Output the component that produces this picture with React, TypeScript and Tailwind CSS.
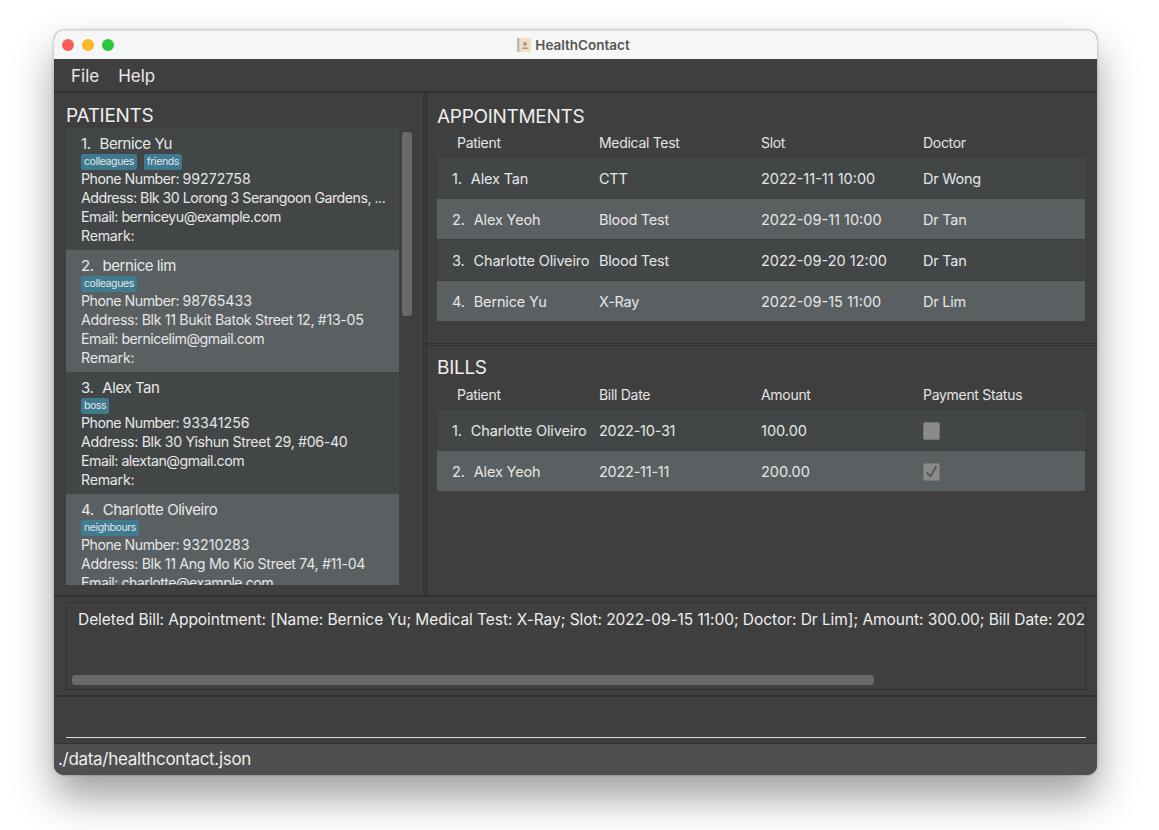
import React from 'react';

type Patient = { name: string; tags: string[]; phone: string; address: string; email: string };

const patients: Patient[] = [
  { name: 'Bernice Yu', tags: ['colleagues', 'friends'], phone: '99272758', address: 'Blk 30 Lorong 3 Serangoon Gardens, ...', email: 'berniceyu@example.com' },
  { name: 'bernice lim', tags: ['colleagues'], phone: '98765433', address: 'Blk 11 Bukit Batok Street 12, #13-05', email: 'bernicelim@gmail.com' },
  { name: 'Alex Tan', tags: ['boss'], phone: '93341256', address: 'Blk 30 Yishun Street 29, #06-40', email: 'alextan@gmail.com' },
  { name: 'Charlotte Oliveiro', tags: ['neighbours'], phone: '93210283', address: 'Blk 11 Ang Mo Kio Street 74, #11-04', email: 'charlotte@example.com' },
];

const appointments = [
  ['Alex Tan', 'CTT', '2022-11-11 10:00', 'Dr Wong'],
  ['Alex Yeoh', 'Blood Test', '2022-09-11 10:00', 'Dr Tan'],
  ['Charlotte Oliveiro', 'Blood Test', '2022-09-20 12:00', 'Dr Tan'],
  ['Bernice Yu', 'X-Ray', '2022-09-15 11:00', 'Dr Lim'],
];

const bills = [
  ['Charlotte Oliveiro', '2022-10-31', '100.00'],
  ['Alex Yeoh', '2022-11-11', '200.00'],
];

const rowBg = (i: number) => (i % 2 === 0 ? 'bg-[#424647]' : 'bg-[#5a5f62]');

const PatientCard = ({ p, i }: { p: Patient; i: number }) => (
  <div className={`h-[122px] shrink-0 pl-[15px] pt-[5px] text-[14.2px] leading-[19px] tracking-[-0.25px] text-[#e6e6e6] ${rowBg(i)}`}>
    <div className="flex h-[21px] items-center gap-[9px] text-[15px] tracking-[-0.45px] text-[#e8e8e8]">
      <span>{i + 1}.</span>
      <span>{p.name}</span>
    </div>
    <div className="flex h-[15px] items-center gap-[7px]">
      {p.tags.map((t) => (
        <span key={t} className="flex h-4 items-center rounded-[2px] bg-[#3e7b91] px-[3px] text-[10.5px] tracking-[-0.4px] text-[#e4e4e4]">{t}</span>
      ))}
    </div>
    <div>
      <span className="tracking-[-0.5px]">Phone Number: </span>
      <span className="tracking-normal">{p.phone}</span>
    </div>
    <div className={`whitespace-nowrap ${i === 0 ? 'tracking-[-0.5px]' : 'tracking-[-0.33px]'}`}>Address: {p.address}</div>
    <div className="tracking-[-0.5px]">Email: {p.email}</div>
    <div>Remark:</div>
  </div>
);

const TableHeader = ({ cols }: { cols: string[] }) => (
  <div className="flex h-[29px] items-center pb-[2px] text-[14px] tracking-[-0.3px] text-[#e4e4e4]">
    <span className="w-[162px] pl-5">{cols[0]}</span>
    <span className="w-[162px]">{cols[1]}</span>
    <span className="w-[162px]">{cols[2]}</span>
    <span>{cols[3]}</span>
  </div>
);

const Checkbox = ({ checked }: { checked: boolean }) => (
  <span className="flex h-[18px] w-[17px] items-center justify-center rounded-[2px] border border-[#777] bg-[#8a8a8a]">
    {checked && (
      <svg width="13" height="13" viewBox="0 0 12 12" fill="none" stroke="#54595b" strokeWidth="1.7">
        <path d="M1.500 6.500 L5 10.500 L10.500 1" />
      </svg>
    )}
  </span>
);

const TableRow = ({ i, cells, last }: { i: number; cells: string[]; last: React.ReactNode }) => (
  <div className={`mb-[1px] flex h-10 items-center pt-[1px] text-[14.5px] text-[#e6e6e6] ${rowBg(i)}`}>
    <span className="flex w-[162px] gap-[9px] whitespace-nowrap pl-[15px] tracking-[-0.15px]">
      <span>{i + 1}.</span>
      <span>{cells[0]}</span>
    </span>
    <span className="w-[162px] tracking-[-0.25px]">{cells[1]}</span>
    <span className="w-[162px]">{cells[2]}</span>
    <span className="tracking-[-0.25px]">{last}</span>
  </div>
);

export default function App() {
  return (
    <div className="h-[830px] w-[1159px] overflow-hidden bg-white pl-[54px] pt-[30px] font-['Inter',sans-serif]">
      <div className="flex h-[745px] w-[1043px] flex-col overflow-hidden rounded-[10px] bg-[#3f3f3f] shadow-[0_22px_40px_rgba(0,0,0,0.38),0_0_3px_rgba(0,0,0,0.3)]">
        {/* title bar */}
        <div className="relative flex h-[29px] shrink-0 items-center justify-center gap-[4px] border-t border-[#dfe1e1] bg-[#f5f7f6] pr-[4px]">
          <div className="absolute left-2 top-2 flex gap-2">
            <span className="h-3 w-3 rounded-full bg-[#fd5b55]" />
            <span className="h-3 w-3 rounded-full bg-[#fdb829]" />
            <span className="h-3 w-3 rounded-full bg-[#28c83e]" />
          </div>
          <svg width="14" height="14" viewBox="0 0 14 14">
            <rect width="14" height="14" fill="#f0dfc4" />
            <rect width="2.500" height="14" fill="#b9b9b9" />
            <circle cx="8" cy="6" r="2" fill="#a89e8c" />
            <path d="M4.500 11 C5 8.500 11 8.500 11.500 11 Z" fill="#a89e8c" />
          </svg>
          <span className="text-[13.5px] font-semibold text-[#555]">HealthContact</span>
        </div>

        {/* menu */}
        <div className="flex h-[34px] shrink-0 items-center gap-[19px] border-b-2 border-[#303030] pl-[17px] pt-[3px] text-[17px] text-[#e8e8e8]">
          <span>File</span>
          <span>Help</span>
        </div>

        <div className="flex h-[504px] shrink-0 border-b-2 border-[#303030]">
          {/* patients */}
          <div className="flex h-full w-[369px] shrink-0 flex-col pl-3">
            <div className="flex h-[35px] shrink-0 items-end text-[19px] leading-[25px] tracking-[-0.3px] text-[#eee]">PATIENTS</div>
            <div className="flex">
              <div className="flex h-[457px] w-[333px] flex-col overflow-hidden">
                {patients.map((p, i) => <PatientCard key={p.name} p={p} i={i} />)}
              </div>
              <div className="ml-[3px] mt-1 h-[184px] w-[10px] rounded-[3px] bg-[#696969]" />
            </div>
          </div>

          <div className="w-1 shrink-0 border-x border-[#303030] bg-[#3a3a3a]" />

          {/* appointments and bills */}
          <div className="flex min-w-0 flex-1 flex-col pl-[10px] pr-[12px]">
            <div className="h-[250px] shrink-0">
              <div className="flex h-9 items-end text-[19px] leading-[25px] tracking-[-0.3px] text-[#eee]">APPOINTMENTS</div>
              <TableHeader cols={['Patient', 'Medical Test', 'Slot', 'Doctor']} />
              {appointments.map((a, i) => (
                <TableRow key={a[0]} i={i} cells={a} last={a[3]} />
              ))}
            </div>
            <div className="-ml-[10px] -mr-[12px] h-[3px] shrink-0 border-y border-[#303030]" />
            <div className="flex-1">
              <div className="flex h-[34px] items-end text-[19px] leading-[25px] tracking-[-0.3px] text-[#eee]">BILLS</div>
              <div className="pt-[1px]">
                <TableHeader cols={['Patient', 'Bill Date', 'Amount', 'Payment Status']} />
              </div>
              {bills.map((b, i) => (
                <TableRow key={b[0]} i={i} cells={b} last={<span className="block"><Checkbox checked={i === 1} /></span>} />
              ))}
            </div>
          </div>
        </div>

        {/* result box */}
        <div className="h-[100px] shrink-0 border-b-2 border-[#303030] px-3 pt-[5px]">
          <div className="relative h-[88px] w-[1020px] overflow-hidden border border-[#333]">
            <div className="whitespace-nowrap pl-[11px] pt-[6px] text-[15.5px] leading-[22px] tracking-[-0.05px] text-[#eee]">
              Deleted Bill: Appointment: [Name: Bernice Yu; Medical Test: X-Ray; Slot: 2022-09-15 11:00; Doctor: Dr Lim]; Amount: 300.00; Bill Date: 202
            </div>
            <div className="absolute bottom-[4px] left-[5px] h-[10px] w-[802px] rounded-[3px] bg-[#696969]" />
          </div>
        </div>

        {/* command box */}
        <div className="h-[47px] shrink-0 border-b border-[#333] px-3 pt-[40px]">
          <div className="h-px w-[1020px] bg-[#dcdcdc]" />
        </div>

        {/* status bar */}
        <div className="flex flex-1 items-center bg-[#4f4f4f] pl-1 text-[17px] tracking-[-0.3px] text-[#eee]">./data/healthcontact.json</div>
      </div>
    </div>
  );
}
